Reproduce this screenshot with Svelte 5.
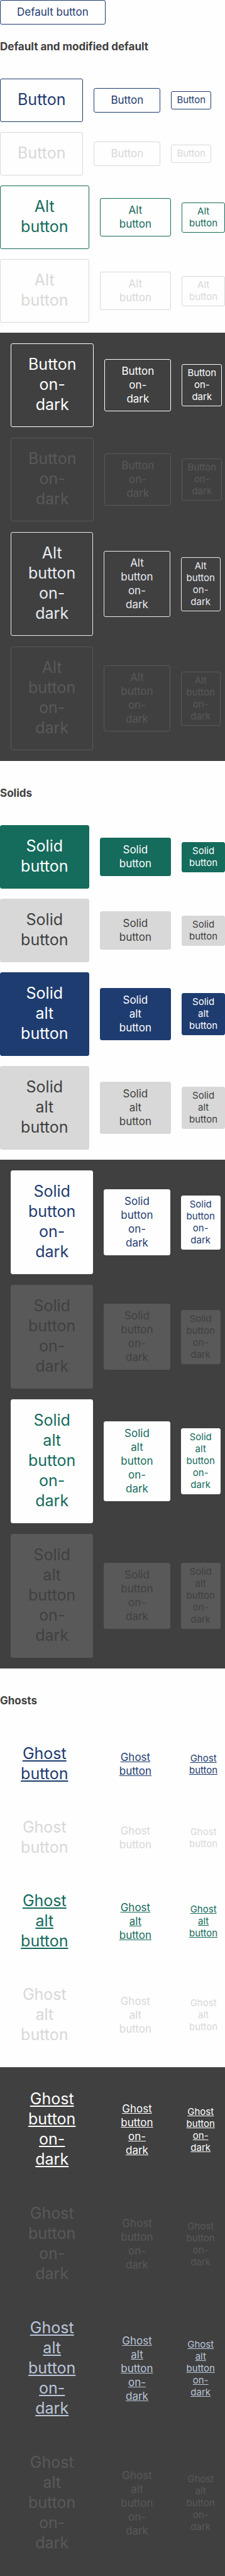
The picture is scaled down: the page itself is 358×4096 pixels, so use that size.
<script>
  const sizes = ['large', 'medium', 'small'];

  const same = (text) => [text, text, text];

  // Every variant is listed once and drawn enabled, then disabled.
  const pair = (kind, labels, disabledLabels = labels) => [
    { kind, labels, disabled: false },
    { kind, labels: disabledLabels, disabled: true }
  ];

  const sections = [
    {
      title: 'Default and modified default',
      light: [
        ...pair('line blue compact', same('Button')),
        ...pair('line green', same('Alt button'))
      ],
      dark: [
        ...pair('line white', same('Button on-dark')),
        ...pair('line pale', same('Alt button on-dark'))
      ]
    },
    {
      title: 'Solids',
      light: [
        ...pair('solid green', same('Solid button')),
        ...pair('solid blue', same('Solid alt button'))
      ],
      dark: [
        ...pair('solid blue', same('Solid button on-dark')),
        ...pair('solid green', same('Solid alt button on-dark'), [
          'Solid alt button on-dark',
          'Solid button on-dark',
          'Solid alt button on-dark'
        ])
      ]
    },
    {
      title: 'Ghosts',
      light: [
        ...pair('ghost blue', same('Ghost button')),
        ...pair('ghost green', same('Ghost alt button'))
      ],
      dark: [
        ...pair('ghost white', same('Ghost button on-dark')),
        ...pair('ghost mist', same('Ghost alt button on-dark'))
      ]
    }
  ];
</script>

{#snippet rows(list)}
  {#each list as row}
    <div class="row {row.kind}">
      {#each row.labels as label, i}
        <button type="button" class="btn {sizes[i]}" disabled={row.disabled}>{label}</button>
      {/each}
    </div>
  {/each}
{/snippet}

<main>
  <div class="intro line blue">
    <button type="button" class="btn medium">Default button</button>
  </div>
  {#each sections as section}
    <section>
      <h2>{section.title}</h2>
      <div class="light">{@render rows(section.light)}</div>
      <div class="dark">{@render rows(section.dark)}</div>
    </section>
  {/each}
</main>

<style>
  :global(body) {
    margin: 0;
    background: #fefefe;
  }

  main {
    font-family: Inter, Roboto, sans-serif;
    color: #404040;
  }

  .intro {
    display: flex;
  }

  h2 {
    margin: 0;
    padding: 40px 0;
    font-size: 17px;
    line-height: 22px;
    font-weight: 700;
  }

  section:first-of-type h2 {
    padding-top: 24px;
  }

  .light,
  .dark {
    display: flex;
    flex-direction: column;
  }

  .light {
    gap: 16px;
    padding-bottom: 16px;
  }

  .dark {
    gap: 17px;
    padding: 17px;
    background: #404040;
  }

  .row {
    display: grid;
    grid-template-columns: 142fr 114fr 69fr;
    align-items: center;
    column-gap: 17px;
  }

  .compact,
  .dark .row {
    grid-template-columns: repeat(3, min-content);
  }

  .btn {
    box-sizing: border-box;
    margin: 0;
    border: 1px solid transparent;
    border-radius: 3px;
    background: transparent;
    font-family: inherit;
    font-weight: 400;
    text-align: center;
    cursor: pointer;
  }

  .btn:disabled {
    cursor: default;
  }

  .large {
    padding: 16px 27px 19px;
    font-size: 25px;
    line-height: 32px;
  }

  .medium {
    padding: 7px 26px 8px;
    font-size: 17px;
    line-height: 22px;
  }

  .small {
    padding: 3px 8px 5px;
    font-size: 15px;
    line-height: 19px;
  }

  .blue { --tone: #1e3c70; }
  .green { --tone: #156b5c; }
  .white { --tone: #fefefe; }
  .pale { --tone: #e8ebf2; }
  .mist { --tone: #bac5d8; }

  .light { --off: #d8d8d8; }
  .dark { --off: #595959; }

  .line .btn {
    border-color: var(--tone);
    color: var(--tone);
  }

  .line .btn:disabled {
    border-color: var(--off);
    color: var(--off);
  }

  .solid .btn {
    border-color: var(--tone);
    background: var(--tone);
    color: #fefefe;
  }

  .dark .solid .btn {
    border-color: #fefefe;
    background: #fefefe;
    color: var(--tone);
  }

  .solid .btn:disabled,
  .dark .solid .btn:disabled {
    border-color: var(--off);
    background: var(--off);
    color: #404040;
  }

  .ghost .btn {
    color: var(--tone);
    text-decoration: underline;
    text-decoration-thickness: 1px;
    text-underline-offset: 1px;
    text-decoration-skip-ink: none;
  }

  .ghost .large {
    text-decoration-thickness: 2px;
    text-underline-offset: 2px;
  }

  .ghost .btn:disabled {
    color: var(--off);
    text-decoration: none;
  }
</style>
